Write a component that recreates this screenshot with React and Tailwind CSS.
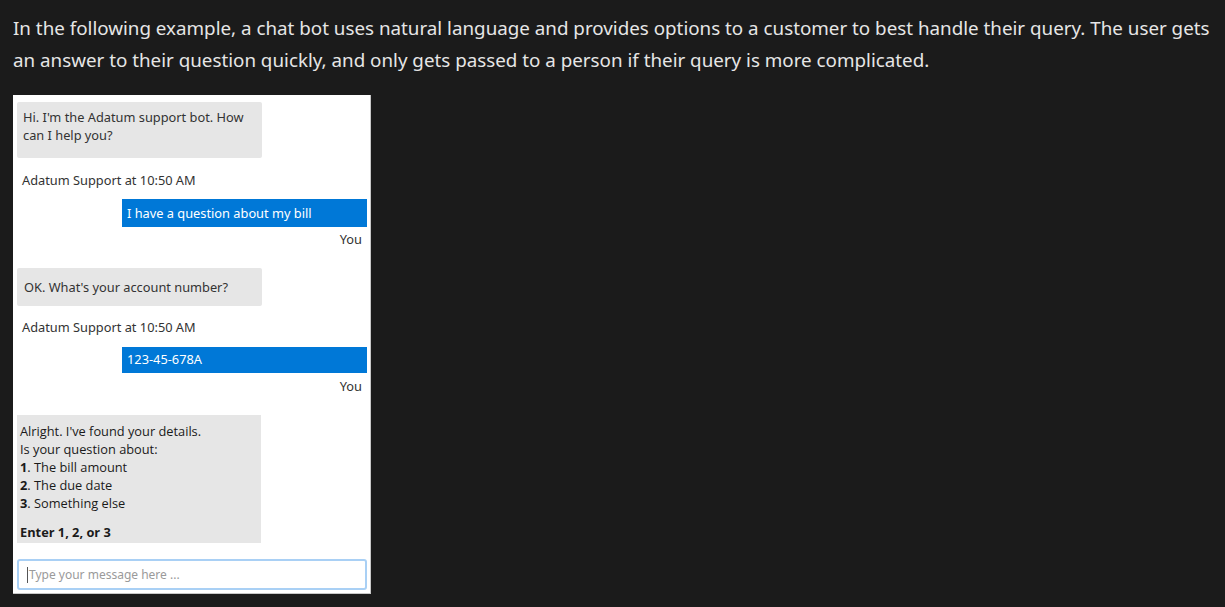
export default function App() {
    return (
        <div className="min-h-screen bg-[#1b1b1b] pl-[13px] pt-[12px]" style={{fontFamily: '"Noto Sans", "Open Sans", sans-serif'}}>
            <p className="text-[18.8px] leading-[32px] text-[#e6e6e6] pr-[10px]">
                In the following example, a chat bot uses natural language and provides options to a customer to best handle their query. The user gets an answer to their question quickly, and only gets passed to a person if their query is more complicated.
            </p>

            <div className="mt-[19px] w-[358px] h-[499px] bg-white border-r border-b border-[#c8c8c8] flex flex-col pl-[4px] pr-[3px] pt-[7px] text-[12.8px] text-[#333]">
                <div className="w-[245px] h-[56px] bg-[#e6e6e6] rounded-[2px] px-[6px] pt-[6px] leading-[18px]">
                    Hi. I'm the Adatum support bot. How can I help you?
                </div>
                <p className="mt-[13px] pl-[5px] leading-[18px]">Adatum Support at 10:50 AM</p>
                <div className="self-end mt-[10px] w-[245px] h-[28px] bg-[#0078d7] text-white flex items-center px-[5px] pt-[2px]">
                    I have a question about my bill
                </div>
                <p className="self-end mt-[3px] pr-[5px] leading-[18px]">You</p>

                <div className="mt-[20px] w-[245px] h-[38px] bg-[#e6e6e6] rounded-[2px] px-[7px] flex items-center leading-[18px]">
                    OK. What's your account number?
                </div>
                <p className="mt-[12px] pl-[5px] leading-[18px]">Adatum Support at 10:50 AM</p>
                <div className="self-end mt-[11px] w-[245px] h-[26px] bg-[#0078d7] text-white flex items-center px-[5px]">
                    123-45-678A
                </div>
                <p className="self-end mt-[4px] pr-[5px] leading-[18px]">You</p>

                <div className="mt-[20px] w-[244px] h-[128px] bg-[#e6e6e6] px-[3px] pt-[7px] leading-[18px] text-[#1a1a1a]" style={{fontFamily: '"Open Sans", "Noto Sans", sans-serif'}}>
                    <p>Alright. I've found your details.</p>
                    <p>Is your question about:</p>
                    <p><span className="font-bold">1</span>. The bill amount</p>
                    <p><span className="font-bold">2</span>. The due date</p>
                    <p><span className="font-bold">3</span>. Something else</p>
                    <p className="mt-[11px] font-bold">Enter 1, 2, or 3</p>
                </div>

                <div className="mt-[16px] h-[31px] border-2 border-[#a9d0f5] rounded-[3px] flex items-center pl-[8px] text-[12px] text-[#9a9a9a]">
                    <span className="w-px h-[16px] bg-[#555] mr-[1px]"></span>
                    Type your message here ...
                </div>
            </div>
        </div>
    );
}
